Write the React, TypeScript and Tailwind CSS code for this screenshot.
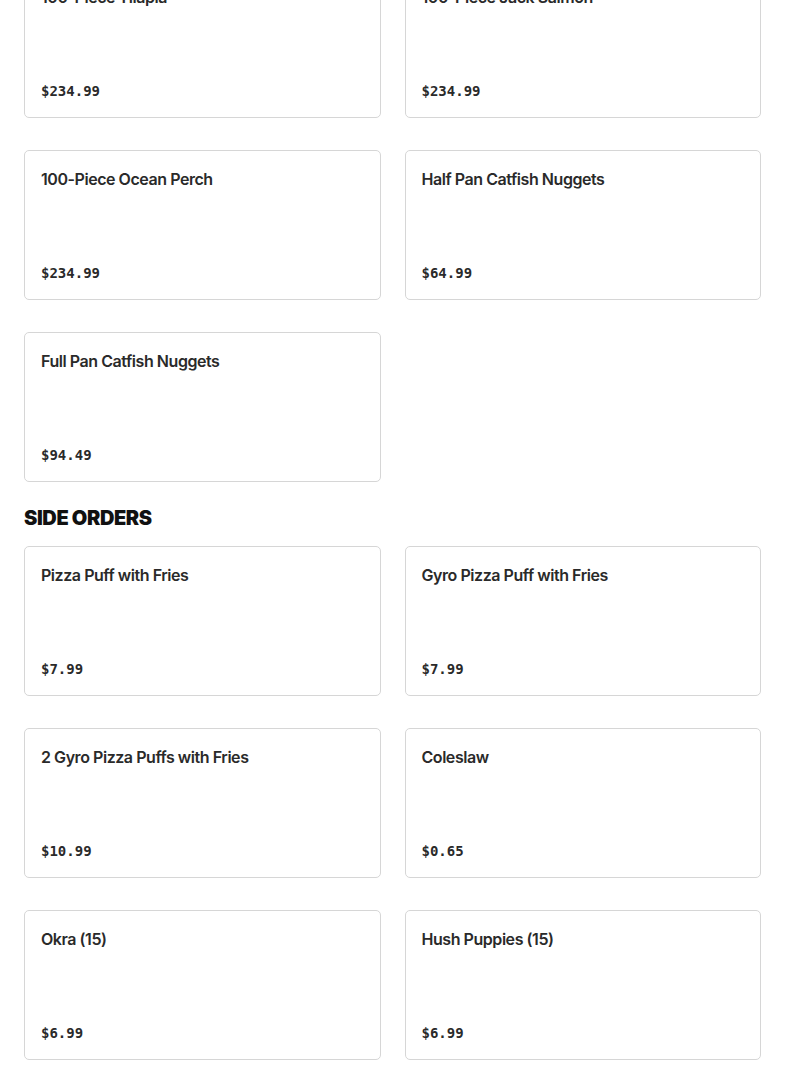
const seafood = [
  { name: "100-Piece Tilapia", price: "$234.99" },
  { name: "100-Piece Jack Salmon", price: "$234.99" },
  { name: "100-Piece Ocean Perch", price: "$234.99" },
  { name: "Half Pan Catfish Nuggets", price: "$64.99" },
  { name: "Full Pan Catfish Nuggets", price: "$94.49" },
];

const sides = [
  { name: "Pizza Puff with Fries", price: "$7.99" },
  { name: "Gyro Pizza Puff with Fries", price: "$7.99" },
  { name: "2 Gyro Pizza Puffs with Fries", price: "$10.99" },
  { name: "Coleslaw", price: "$0.65" },
  { name: "Okra (15)", price: "$6.99" },
  { name: "Hush Puppies (15)", price: "$6.99" },
];

function ItemCard({ name, price }: { name: string; price: string }) {
  return (
    <div className="h-[150px] flex flex-col justify-between p-4 bg-white border border-[#d6d6d6] rounded-[5px]">
      <h3 className="text-base leading-6 font-semibold text-[#2a2a2a] font-['Inter',sans-serif] tracking-[-0.45px]">
        {name}
      </h3>
      <span className="text-sm leading-5 font-semibold text-[#2a2a2a] font-['DejaVu_Sans_Mono',monospace]">
        {price}
      </span>
    </div>
  );
}

function App() {
  return (
    <main className="w-full bg-white px-6 pb-8">
      {/* SEAFOOD (scrolled) */}
      <div className="grid grid-cols-2 gap-x-6 gap-y-8 -mt-8">
        {seafood.map((item) => (
          <ItemCard key={item.name} {...item} />
        ))}
      </div>

      {/* SIDE ORDERS */}
      <h2 className="mt-6 mb-4 text-xl leading-6 font-black uppercase text-[#111] font-['Inter',sans-serif] tracking-[-0.4px]">
        Side Orders
      </h2>
      <div className="grid grid-cols-2 gap-x-6 gap-y-8">
        {sides.map((item) => (
          <ItemCard key={item.name} {...item} />
        ))}
      </div>
    </main>
  );
}

export default App;
